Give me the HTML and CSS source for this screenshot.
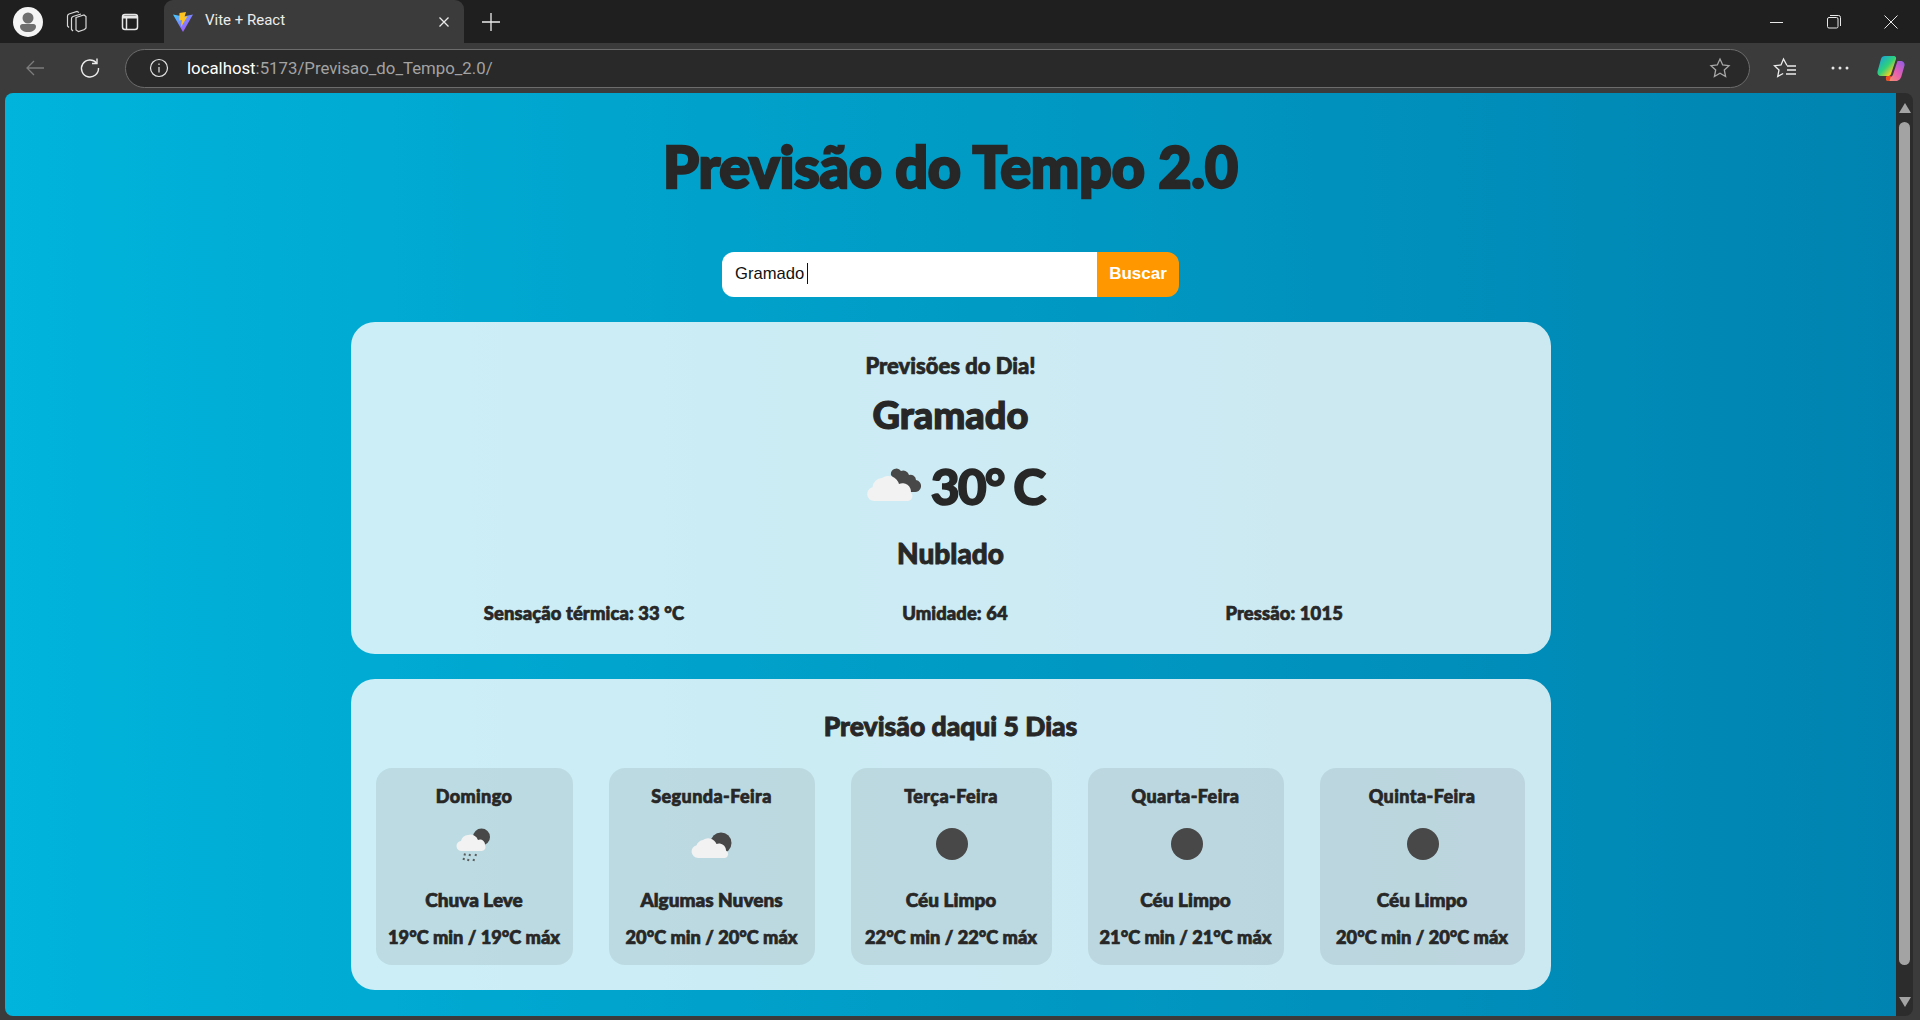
FILE: index.html
```html
<!DOCTYPE html>
<html lang="pt-BR">
<head>
<meta charset="utf-8">
<title>Vite + React</title>
<link rel="stylesheet" href="styles.css">
</head>
<body>
<div class="browser">
  <div class="tabstrip">
    <div class="avatar">
      <svg width="30" height="30" viewBox="0 0 30 30"><circle cx="15" cy="15" r="15" fill="#f4f4f4"/><circle cx="15" cy="11" r="5.500" fill="#6e6e6e"/><path d="M7 19.500c0-1.400 1.100-2.500 2.500-2.500h11c1.400 0 2.500 1.100 2.500 2.500 0 3.500-3.500 5.500-8 5.500s-8-2-8-5.500z" fill="#6e6e6e"/></svg>
    </div>
    <svg class="strip-icon collections" width="24" height="24" viewBox="0 0 24 24" fill="none" stroke="#d8d8d8" stroke-width="1.200"><path d="M11 7.500l8-2.500 2 1.500v11.500l-1.500 1.500-6 2-2.500-1.500z"/><path d="M8 21l-1.500-1.500v-11c0-1 .5-1.500 1.500-2l8-2.500"/><path d="M4 17.500l-1.500-1.500V6c0-1 .5-1.500 1.500-2l8-2.500 2 1"/></svg>
    <svg class="strip-icon vtabs" width="20" height="20" viewBox="0 0 20 20" fill="none" stroke="#e6e6e6" stroke-width="1.500"><rect x="2.500" y="2.500" width="15" height="15" rx="2.500"/><path d="M2.500 5h15" stroke-width="3"/><path d="M6.500 6v11"/></svg>
    <div class="tab">
      <svg class="favicon" width="20" height="20" viewBox="0 0 20 20"><defs><linearGradient id="vt" x1="0" y1="0" x2="1" y2="1"><stop offset="0" stop-color="#41d1ff"/><stop offset="1" stop-color="#bd34fe"/></linearGradient></defs><path d="M0 2.500l10 2 10-2-10 17.500z" fill="url(#vt)"/><path d="M6.500 1l6.500-1-1.500 5 3-.8L8 15l1-7-2.800.6z" fill="#ffc31f"/></svg>
      <span class="tab-title">Vite + React</span>
      <svg class="tab-close" width="12" height="12" viewBox="0 0 12 12" stroke="#ececec" stroke-width="1.300"><path d="M1.500 1.500l9 9M10.500 1.500l-9 9"/></svg>
    </div>
    <svg class="new-tab" width="20" height="20" viewBox="0 0 20 20" stroke="#ececec" stroke-width="1.300"><path d="M10 1v18M1 10h18"/></svg>
    <div class="window-controls">
      <svg width="14" height="14" viewBox="0 0 14 14" stroke="#e8e8e8" stroke-width="1"><path d="M0 7.500h13"/></svg>
      <svg width="14" height="14" viewBox="0 0 14 14" fill="none" stroke="#e8e8e8" stroke-width="1"><rect x=".5" y="2.500" width="10.500" height="10.500" rx="1.500"/><path d="M3 .5h8.500a2 2 0 0 1 2 2V11"/></svg>
      <svg width="14" height="14" viewBox="0 0 14 14" stroke="#e8e8e8" stroke-width="1"><path d="M.5.5l13 13M13.500.5l-13 13"/></svg>
    </div>
  </div>
  <div class="toolbar">
    <svg class="tool back" width="20" height="20" viewBox="0 0 20 20" fill="none" stroke="#7c7c7c" stroke-width="1.300"><path d="M19 10H2M9 3l-7 7 7 7"/></svg>
    <svg class="tool reload" width="22" height="22" viewBox="0 0 22 22" fill="none" stroke="#ececec" stroke-width="1.400"><path d="M17.500 6A8.500 8.500 0 1 0 19.500 11"/><path d="M18 1.500V6.500H13"/></svg>
    <div class="address">
      <svg class="info" width="20" height="20" viewBox="0 0 20 20" fill="none" stroke="#e4e4e4" stroke-width="1.200"><circle cx="10" cy="10" r="8.500"/><path d="M10 9v5.500M10 5.500v1.600"/></svg>
      <span class="url"><span class="host">localhost</span>:5173/Previsao_do_Tempo_2.0/</span>
      <svg class="star" width="22" height="22" viewBox="0 0 22 22" fill="none" stroke="#a8a8a8" stroke-width="1.300"><path d="M11 2l2.700 6 6.300.7-4.700 4.300 1.300 6.500L11 16.200 5.400 19.500 6.700 13 2 8.700 8.300 8z"/></svg>
    </div>
    <svg class="tool favs" width="24" height="22" viewBox="0 0 24 22" fill="none" stroke="#ececec" stroke-width="1.300"><path d="M14 8.500L10.500 2 8 8 1.500 8.700 6 13l-1.300 6.500 5.500-3"/><path d="M14 9h9M14 13h9M13 17h10"/></svg>
    <svg class="tool dots" width="18" height="6" viewBox="0 0 18 6" fill="#e6e6e6"><circle cx="2" cy="3" r="1.500"/><circle cx="9" cy="3" r="1.500"/><circle cx="16" cy="3" r="1.500"/></svg>
    <svg class="tool copilot" width="28" height="28" viewBox="0 0 28 28">
      <defs>
        <linearGradient id="cpa" x1="0" y1="0" x2="1" y2="1"><stop offset="0" stop-color="#1599f0"/><stop offset=".5" stop-color="#2fd17a"/><stop offset=".8" stop-color="#f5d020"/><stop offset="1" stop-color="#f5a020"/></linearGradient>
        <linearGradient id="cpb" x1="1" y1="0" x2="0" y2="1"><stop offset="0" stop-color="#8a5be8"/><stop offset=".5" stop-color="#e860b0"/><stop offset="1" stop-color="#f59a60"/></linearGradient>
      </defs>
      <path d="M8 2h9c1.500 0 2.500 1.500 2 3L14 20c-.5 1.500-1.500 2-3 2H4c-2.500 0-4-2-3.500-4.500L4 5c.5-2 2-3 4-3z" fill="url(#cpa)"/>
      <path d="M9 23h4c1.500 0 2.500-1 3-2.500L20.500 7H24c2.500 0 4 2.500 3.500 4.500L24.500 22c-.7 2.500-2.500 5-5.500 5H11c-1.500 0-2.500-2-2-4z" fill="url(#cpb)"/>
      <path d="M9.500 22H14l-1.500 5H11c-2 0-2.500-2-1.500-5z" fill="#ef4a20"/>
    </svg>
  </div>
  <div class="viewport">
    <main class="page">
      <h1 class="title">Previsão do Tempo 2.0</h1>
      <form class="search">
        <div class="search-input"><span>Gramado</span><i class="caret"></i></div>
        <button class="search-button" type="button">Buscar</button>
      </form>
      <section class="card current">
        <h2 class="current-label">Previsões do Dia!</h2>
        <h2 class="city">Gramado</h2>
        <div class="temp-row">
          <svg class="temp-icon" width="56" height="40" viewBox="0 0 56 40"><path d="M26 9a5.500 5.500 0 0 1 10-4 6 6 0 0 1 8 4 5.500 5.500 0 0 1 7 5 6 6 0 0 1-2 12H38z" fill="#484848"/><path d="M9 35a7 7 0 0 1-1.500-13.800A10 10 0 0 1 17 12a11 11 0 0 1 17 6 8.500 8.500 0 0 1 12 8.500A5 5 0 0 1 43 35z" fill="#f2f2f2"/></svg>
          <span class="temp">30° C</span>
        </div>
        <p class="desc">Nublado</p>
        <div class="details">
          <span>Sensação térmica: 33 °C</span>
          <span>Umidade: 64</span>
          <span>Pressão: 1015</span>
        </div>
      </section>
      <section class="card forecast">
        <h3 class="forecast-title">Previsão daqui 5 Dias</h3>
        <div class="forecast-list">
          <article class="day">
            <p class="day-name">Domingo</p>
            <svg class="day-icon" width="50" height="50" viewBox="0 0 50 50"><circle cx="32.500" cy="18" r="8.500" fill="#484848"/><path d="M13 32a5 5 0 0 1-1-10 7 7 0 0 1 7-6 8 8 0 0 1 10 5 5 5 0 0 1 7 5 4 4 0 0 1-3 6z" fill="#f2f2f2"/><g stroke="#5c5c5c" stroke-width="2"><path d="M16 34.500l-.5 2M15 39l-.5 2M21 35l-.5 2M19.500 40l-.5 2M27 35l-.5 2M25 40l-.5 2"/></g></svg>
            <p class="day-desc">Chuva Leve</p>
            <p class="day-temp">19°C min / 19°C máx</p>
          </article>
          <article class="day">
            <p class="day-name">Segunda-Feira</p>
            <svg class="day-icon" width="50" height="50" viewBox="0 0 50 50"><circle cx="34" cy="24" r="10.500" fill="#484848"/><path d="M11 39a6.500 6.500 0 0 1-1.500-12.800A8.500 8.500 0 0 1 16 21a9 9 0 0 1 13.500 4 7 7 0 0 1 9.500 6.500A4 4 0 0 1 38 39z" fill="#f2f2f2"/></svg>
            <p class="day-desc">Algumas Nuvens</p>
            <p class="day-temp">20°C min / 20°C máx</p>
          </article>
          <article class="day">
            <p class="day-name">Terça-Feira</p>
            <svg class="day-icon sun" width="50" height="50" viewBox="0 0 50 50"><circle cx="25" cy="25" r="16" fill="#484848"/></svg>
            <p class="day-desc">Céu Limpo</p>
            <p class="day-temp">22°C min / 22°C máx</p>
          </article>
          <article class="day">
            <p class="day-name">Quarta-Feira</p>
            <svg class="day-icon sun" width="50" height="50" viewBox="0 0 50 50"><circle cx="25" cy="25" r="16" fill="#484848"/></svg>
            <p class="day-desc">Céu Limpo</p>
            <p class="day-temp">21°C min / 21°C máx</p>
          </article>
          <article class="day">
            <p class="day-name">Quinta-Feira</p>
            <svg class="day-icon sun" width="50" height="50" viewBox="0 0 50 50"><circle cx="25" cy="25" r="16" fill="#484848"/></svg>
            <p class="day-desc">Céu Limpo</p>
            <p class="day-temp">20°C min / 20°C máx</p>
          </article>
        </div>
      </section>
    </main>
    <div class="scrollbar">
      <svg width="12" height="10" viewBox="0 0 12 10" fill="#a3a3a3"><path d="M6 0l6 10H0z"/></svg>
      <div class="thumb"></div>
      <svg width="12" height="10" viewBox="0 0 12 10" fill="#a3a3a3"><path d="M0 0h12L6 10z"/></svg>
    </div>
  </div>
</div>
</body>
</html>
```
FILE: styles.css
```css
* { box-sizing: border-box; }
html, body { margin: 0; height: 100%; overflow: hidden; background: #3b3b3b; }
h1, h2, h3, p { margin: 0; font-weight: 900; }

.browser { height: 1020px; display: flex; flex-direction: column; font-family: "Open Sans", sans-serif; }

.tabstrip { height: 43px; flex: none; background: #1f1f1f; display: flex; align-items: center; padding-left: 13px; }
.avatar { width: 30px; height: 30px; flex: none; margin-right: 22px; }
.avatar svg { display: block; }
.strip-icon { flex: none; }
.collections { margin-right: 31px; }
.vtabs { margin-right: 24px; }
.tab { width: 300px; height: 43px; flex: none; background: #3b3b3b; border-radius: 9px 9px 0 0; display: flex; align-items: center; padding: 0 14px 0 9px; }
.favicon { flex: none; margin-right: 12px; }
.tab-title { color: #ececec; font-family: "Roboto", sans-serif; font-size: 15px; flex: 1; white-space: nowrap; margin-top: -3px; }
.tab-close { flex: none; }
.new-tab { flex: none; margin-left: 17px; }
.window-controls { margin-left: auto; display: flex; align-items: center; gap: 43px; padding-right: 22px; }

.toolbar { height: 50px; flex: none; background: #3b3b3b; display: flex; align-items: center; padding: 0 11px 0 25px; }
.tool { flex: none; }
.back { margin-right: 34px; }
.reload { margin-right: 24px; }
.address { width: 1625px; height: 39px; flex: none; border: 1px solid #6c6c6c; border-radius: 20px; background: #292929; display: flex; align-items: center; padding: 0 18px 0 23px; margin-right: 23px; }
.info { flex: none; margin-right: 18px; }
.url { flex: 1; font-family: "Roboto", sans-serif; font-size: 16.800px; color: #a3a3a3; white-space: nowrap; }
.host { color: #fff; }
.star { flex: none; }
.favs { margin-right: 34px; }
.dots { margin-right: 28px; }

.viewport { width: 1908px; height: 923px; margin-left: 5px; flex: none; display: flex; border-radius: 8px; overflow: hidden; }
.page { width: 1891px; height: 923px; flex: none; overflow: hidden; background: linear-gradient(to right, #00b4db, #0083b0); color: #272727; font-family: "Lato", sans-serif; display: flex; flex-direction: column; align-items: center; text-align: center; -webkit-text-stroke: .7px #272727; }

.scrollbar { flex: 1; background: #2c2c2c; display: flex; flex-direction: column; align-items: center; padding: 10px 0 8px; }
.scrollbar svg { flex: none; }
.thumb { width: 11px; height: 843px; margin: 9px 0 32px; background: #a3a3a3; border-radius: 6px; flex: none; }

.title { font-size: 57.500px; line-height: 70px; margin-top: 38px; letter-spacing: -.2px; -webkit-text-stroke: 2.400px #272727; }

.search { display: flex; margin-top: 51px; width: 457px; height: 45px; border-radius: 12px; overflow: hidden; -webkit-text-stroke: 0; }
.search-input { flex: 1; background: #fff; display: flex; align-items: center; padding: 0 0 2px 13px; font-family: "Liberation Sans", sans-serif; font-size: 16.600px; color: #111; }
.caret { width: 1px; height: 21px; margin-left: 3px; background: #111; }
.search-button { width: 82px; border: 0; background: #ff9800; color: #fff; font: bold 17px "Liberation Sans", sans-serif; padding: 0 0 2px; }

.card { width: 1200px; flex: none; background: rgba(255, 255, 255, .8); border-radius: 24px; }
.current { height: 332px; margin-top: 25px; padding-top: 30px; }
.current-label { font-size: 22px; line-height: 28px; }
.city { font-size: 38px; line-height: 46px; margin-top: 11px; -webkit-text-stroke: 1.200px #272727; }
.temp-row { display: flex; align-items: center; justify-content: center; gap: 10px; margin-top: 22px; height: 54px; padding-left: 8px; }
.temp-icon { flex: none; }
.temp { font-size: 50px; font-weight: 900; line-height: 54px; letter-spacing: -2px; -webkit-text-stroke: 1.500px #272727; }
.desc { font-size: 28px; line-height: 34px; margin-top: 23px; -webkit-text-stroke: .9px #272727; }
.details { display: grid; grid-template-columns: 201px 109px 116px; column-gap: 216px; padding-left: 133px; margin-top: 31px; font-size: 18.400px; font-weight: 900; line-height: 24px; white-space: nowrap; letter-spacing: .1px; }
.details span { display: block; }

.forecast { height: 311px; margin-top: 25px; padding: 30px 25px 0; }
.forecast-title { font-size: 26.500px; line-height: 34px; -webkit-text-stroke: .9px #272727; }
.forecast-list { display: grid; grid-template-columns: 197px 206px 201px 196px 205px; column-gap: 36px; margin-top: 25px; }
.day { height: 197px; background: rgba(0, 0, 0, .08); border-radius: 16px; padding-top: 15px; display: flex; flex-direction: column; align-items: center; white-space: nowrap; }
.day-name { font-size: 18px; line-height: 26px; letter-spacing: .4px; }
.day-desc { font-size: 19px; line-height: 26px; margin-top: 18px; }
.day-icon { flex: none; margin-top: 10px; }
.sun { margin-left: 2px; }
.day-temp { font-size: 18.200px; line-height: 26px; margin-top: 11px; }
```
